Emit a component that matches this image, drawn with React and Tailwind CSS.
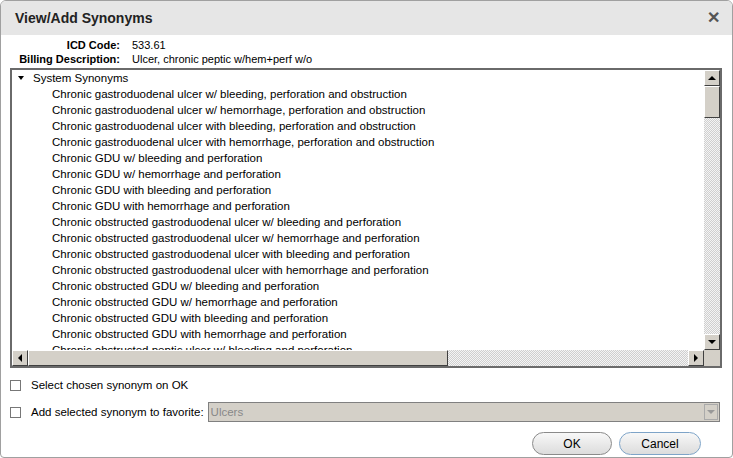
import React from 'react';

const items = [
  'Chronic gastroduodenal ulcer w/ bleeding, perforation and obstruction',
  'Chronic gastroduodenal ulcer w/ hemorrhage, perforation and obstruction',
  'Chronic gastroduodenal ulcer with bleeding, perforation and obstruction',
  'Chronic gastroduodenal ulcer with hemorrhage, perforation and obstruction',
  'Chronic GDU w/ bleeding and perforation',
  'Chronic GDU w/ hemorrhage and perforation',
  'Chronic GDU with bleeding and perforation',
  'Chronic GDU with hemorrhage and perforation',
  'Chronic obstructed gastroduodenal ulcer w/ bleeding and perforation',
  'Chronic obstructed gastroduodenal ulcer w/ hemorrhage and perforation',
  'Chronic obstructed gastroduodenal ulcer with bleeding and perforation',
  'Chronic obstructed gastroduodenal ulcer with hemorrhage and perforation',
  'Chronic obstructed GDU w/ bleeding and perforation',
  'Chronic obstructed GDU w/ hemorrhage and perforation',
  'Chronic obstructed GDU with bleeding and perforation',
  'Chronic obstructed GDU with hemorrhage and perforation',
  'Chronic obstructed peptic ulcer w/ bleeding and perforation',
];

const hatch = {
  backgroundImage: 'repeating-conic-gradient(#cfcfcf 0 25%, #f4f4f4 0 50%)',
  backgroundSize: '2px 2px',
};

const ScrollBtn = ({ dir }) => (
  <div className="w-[16px] h-[16px] bg-[#d4d0c8] border border-t-white border-l-white border-r-[#404040] border-b-[#404040] flex items-center justify-center shrink-0">
    <div className={
      dir === 'up' ? 'w-0 h-0 border-x-[4px] border-x-transparent border-b-[4px] border-b-black' :
      dir === 'down' ? 'w-0 h-0 border-x-[4px] border-x-transparent border-t-[4px] border-t-black' :
      dir === 'left' ? 'w-0 h-0 border-y-[4px] border-y-transparent border-r-[4px] border-r-black' :
      'w-0 h-0 border-y-[4px] border-y-transparent border-l-[4px] border-l-black'
    } />
  </div>
);

const Thumb = ({ className }) => (
  <div className={`bg-[#d4d0c8] border border-t-white border-l-white border-r-[#404040] border-b-[#404040] ${className}`} />
);

export default function App() {
  return (
    <div className="w-[733px] h-[458px] bg-white text-[11.5px] text-black" style={{ fontFamily: '"Liberation Sans", Arial, sans-serif' }}>
      <div className="w-full h-full border border-[#a0a0a0] rounded-t-[6px] rounded-b-[4px] flex flex-col overflow-hidden">
        <div className="h-[34px] bg-[#e6e6e6] flex items-center justify-between pl-[14px] pr-[12px] shrink-0">
          <span className="text-[14px] font-bold text-[#222]">View/Add Synonyms</span>
          <span className="text-[#555] font-bold text-[16px] leading-none">✕</span>
        </div>
        <div className="flex flex-col px-[9px] pt-[3px]">
          <div className="grid grid-cols-[104px_1fr] gap-x-[12px] text-[11px] leading-[14px] pl-[6px]">
            <span className="font-bold text-right whitespace-nowrap">ICD Code:</span><span>533.61</span>
            <span className="font-bold text-right whitespace-nowrap">Billing Description:</span><span>Ulcer, chronic peptic w/hem+perf w/o</span>
          </div>
          <div className="mt-[2px] w-[712px] h-[300px] border-2 border-[#6a6a6a] flex flex-col">
            <div className="flex flex-1 min-h-0">
              <div className="flex-1 overflow-hidden pt-[0px] leading-[16px]">
                <div className="flex items-center pl-[6px]">
                  <div className="w-0 h-0 border-x-[3px] border-x-transparent border-t-[4px] border-t-black mr-[9px]" />
                  System Synonyms
                </div>
                {items.map((t, i) => (
                  <div key={i} className="pl-[40px] whitespace-nowrap">{t}</div>
                ))}
              </div>
              <div className="w-[16px] flex flex-col" style={hatch}>
                <ScrollBtn dir="up" />
                <Thumb className="h-[32px]" />
                <div className="flex-1" />
                <ScrollBtn dir="down" />
              </div>
            </div>
            <div className="h-[16px] flex shrink-0">
              <div className="flex flex-1" style={hatch}>
                <ScrollBtn dir="left" />
                <Thumb className="w-[420px]" />
                <div className="flex-1" />
                <ScrollBtn dir="right" />
              </div>
              <div className="w-[16px] bg-[#d4d0c8]" />
            </div>
          </div>
          <div className="flex items-center mt-[9px]">
            <div className="w-[11px] h-[11px] border border-[#777] bg-white mr-[10px]" />
            Select chosen synonym on OK
          </div>
          <div className="flex items-center mt-[8px]">
            <div className="w-[11px] h-[11px] border border-[#777] bg-white mr-[10px] shrink-0" />
            <span className="whitespace-nowrap">Add selected synonym to favorite:</span>
            <div className="ml-[4px] flex-1 mr-[3px] h-[20px] bg-[#d4d0c8] border border-[#808080] flex items-center justify-between pl-[2px] pr-[1px]">
              <span className="text-[#888]">Ulcers</span>
              <div className="w-[14px] h-[16px] border border-[#aaa] flex items-center justify-center">
                <div className="w-0 h-0 border-x-[4px] border-x-transparent border-t-[4px] border-t-[#999]" />
              </div>
            </div>
          </div>
          <div className="flex justify-end gap-[7px] mt-[10px] pr-[22px]">
            <div className="w-[80px] h-[23px] rounded-full border border-[#8a8a8a] bg-gradient-to-b from-[#f8f8f8] to-[#dcdcdc] flex items-center justify-center text-[12px]">OK</div>
            <div className="w-[82px] h-[23px] rounded-full border border-[#7ea4c8] bg-gradient-to-b from-[#f8f8f8] to-[#dcdcdc] flex items-center justify-center text-[12px]">Cancel</div>
          </div>
        </div>
      </div>
    </div>
  );
}
